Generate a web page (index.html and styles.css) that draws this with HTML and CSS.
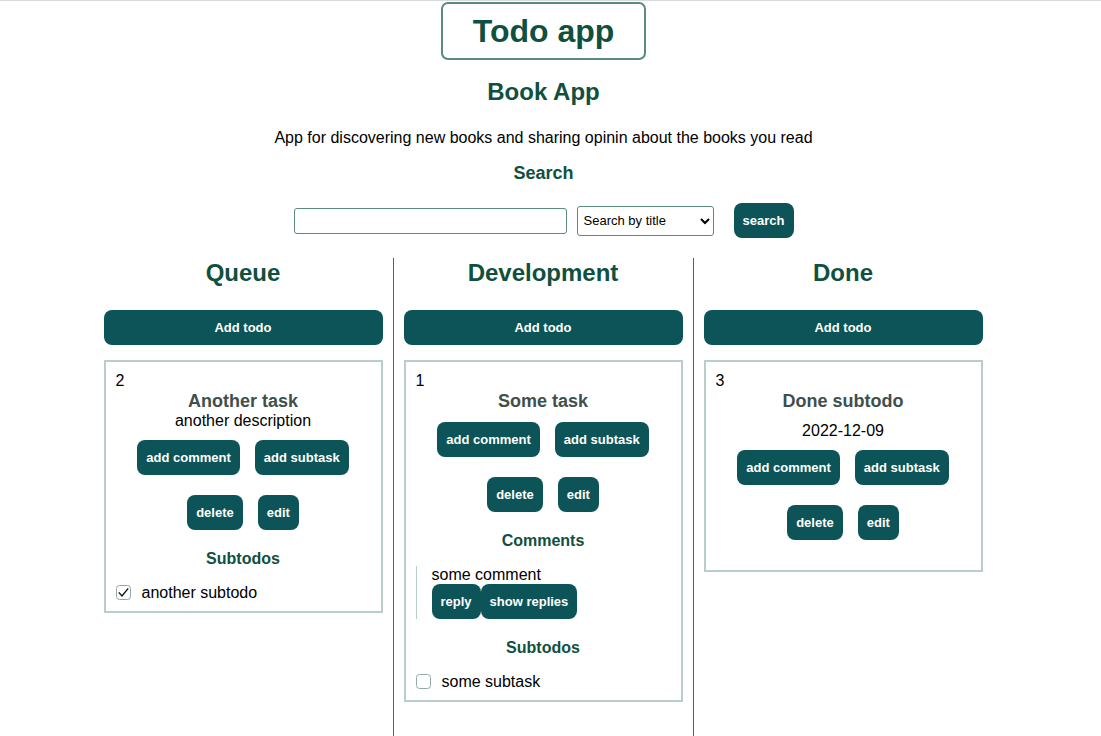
FILE: index.html
```html
<!DOCTYPE html>
<html lang="en">
<head>
<meta charset="utf-8">
<title>Todo app</title>
<link rel="stylesheet" href="styles.css">
</head>
<body>
<div class="page">
  <header class="header">
    <h1 class="logo">Todo app</h1>
    <h2 class="app-title">Book App</h2>
    <p class="app-desc">App for discovering new books and sharing opinin about the books you read</p>
    <h3 class="search-title">Search</h3>
    <form class="search-row">
      <input class="search-input" type="text">
      <select class="search-select">
        <option>Search by title</option>
      </select>
      <button class="btn btn-search" type="button">search</button>
    </form>
  </header>

  <main class="board">
    <section class="column">
      <h2 class="column-title">Queue</h2>
      <button class="btn btn-add" type="button">Add todo</button>
      <article class="card">
        <div class="card-id">2</div>
        <h3 class="card-title">Another task</h3>
        <div class="card-desc">another description</div>
        <div class="actions">
          <button class="btn" type="button">add comment</button>
          <button class="btn" type="button">add subtask</button>
        </div>
        <div class="actions actions-second">
          <button class="btn" type="button">delete</button>
          <button class="btn" type="button">edit</button>
        </div>
        <h4 class="section-title">Subtodos</h4>
        <div class="subtodo">
          <span class="check">
            <svg viewBox="0 0 15 15" width="15" height="15"><rect x="0.5" y="0.5" width="14" height="14" rx="3" fill="#fff" stroke="#8fa9a3"/><path d="M2.8 7.4 L6 11 L12.2 3.4" fill="none" stroke="#111" stroke-width="1.4"/></svg>
          </span>
          <span class="subtodo-text">another subtodo</span>
        </div>
      </article>
    </section>

    <section class="column">
      <h2 class="column-title">Development</h2>
      <button class="btn btn-add" type="button">Add todo</button>
      <article class="card">
        <div class="card-id">1</div>
        <h3 class="card-title">Some task</h3>
        <div class="actions">
          <button class="btn" type="button">add comment</button>
          <button class="btn" type="button">add subtask</button>
        </div>
        <div class="actions actions-second">
          <button class="btn" type="button">delete</button>
          <button class="btn" type="button">edit</button>
        </div>
        <h4 class="section-title">Comments</h4>
        <div class="comment">
          <div class="comment-text">some comment</div>
          <div class="comment-actions">
            <button class="btn" type="button">reply</button>
            <button class="btn" type="button">show replies</button>
          </div>
        </div>
        <h4 class="section-title">Subtodos</h4>
        <div class="subtodo">
          <span class="check">
            <svg viewBox="0 0 15 15" width="15" height="15"><rect x="0.5" y="0.5" width="14" height="14" rx="3" fill="#fff" stroke="#8fa9a3"/></svg>
          </span>
          <span class="subtodo-text">some subtask</span>
        </div>
      </article>
    </section>

    <section class="column">
      <h2 class="column-title">Done</h2>
      <button class="btn btn-add" type="button">Add todo</button>
      <article class="card card-done">
        <div class="card-id">3</div>
        <h3 class="card-title">Done subtodo</h3>
        <p class="card-date">2022-12-09</p>
        <div class="actions">
          <button class="btn" type="button">add comment</button>
          <button class="btn" type="button">add subtask</button>
        </div>
        <div class="actions actions-second">
          <button class="btn" type="button">delete</button>
          <button class="btn" type="button">edit</button>
        </div>
      </article>
    </section>
  </main>
</div>
</body>
</html>
```

FILE: styles.css
```css
* {
  box-sizing: border-box;
}

html, body {
  margin: 0;
  padding: 0;
  background: #fff;
}

body {
  font-family: "Liberation Sans", Arial, sans-serif;
  color: #000;
  font-size: 16px;
  overflow: hidden;
  border-top: 1px solid #dadada;
}

.page {
  width: 1087px;
}

.header {
  display: flex;
  flex-direction: column;
  align-items: center;
}

.logo {
  margin: 1px 0 0;
  height: 58px;
  padding: 0 30px;
  border: 2px solid #5b8b7c;
  border-radius: 7px;
  font-size: 32px;
  line-height: 55px;
  font-weight: bold;
  color: #0f5040;
}

.app-title {
  margin: 18px 0 0;
  font-size: 24px;
  line-height: 28px;
  font-weight: bold;
  color: #0f5040;
}

.app-desc {
  margin: 23px 0 0;
  font-size: 16px;
  line-height: 18px;
}

.search-title {
  margin: 16px 0 0;
  font-size: 18px;
  line-height: 20px;
  font-weight: bold;
  color: #0f5040;
}

.search-row {
  margin: 20px 0 0;
  display: flex;
  align-items: center;
  height: 35px;
}

.search-input {
  width: 273px;
  height: 26px;
  border: 1px solid #5b8b7c;
  border-radius: 3px;
  margin: 0 10px 0 0;
  padding: 0 4px;
  font: 13px "Liberation Sans", Arial, sans-serif;
}

.search-select {
  width: 137px;
  height: 30px;
  border: 1px solid #5b8b7c;
  border-radius: 3px;
  margin: 0 20px 0 0;
  padding: 0 2px;
  background: #fff;
  color: #000;
  font: 13px "Liberation Sans", Arial, sans-serif;
}

.btn {
  height: 35px;
  padding: 0 9px;
  border: none;
  border-radius: 8px;
  background: #0c5457;
  color: #fff;
  font: bold 13px "Liberation Sans", Arial, sans-serif;
  cursor: pointer;
  white-space: nowrap;
}

.btn-search {
  width: 60px;
  padding: 0;
}

.board {
  margin: 20px auto 0;
  width: 900px;
  display: flex;
  align-items: stretch;
}

.column {
  width: 300px;
  min-height: 520px;
  padding: 0 10px;
  border-right: 1px solid #3f6b66;
  display: flex;
  flex-direction: column;
}

.column:last-child {
  border-right: 1px solid transparent;
}

.column-title {
  margin: 0;
  padding-top: 1px;
  text-align: center;
  font-size: 24px;
  line-height: 27px;
  font-weight: bold;
  color: #0f5040;
}

.btn-add {
  margin-top: 24px;
  width: 100%;
  flex: none;
}

.card {
  margin-top: 15px;
  border: 2px solid #b9cec8;
  padding: 9px 10px 9px;
  display: flex;
  flex-direction: column;
}

.card-done {
  padding-bottom: 30px;
}

.card-id {
  font-size: 16px;
  line-height: 18px;
  padding-top: 1px;
  height: 18px;
}

.card-title {
  margin: 2px 0 0;
  text-align: center;
  font-size: 18px;
  line-height: 20px;
  font-weight: bold;
  color: #3f4f4b;
}

.card-desc {
  padding-top: 1px;
  text-align: center;
  font-size: 16px;
  line-height: 17px;
}

.card-date {
  margin: 11px 0 0;
  text-align: center;
  font-size: 16px;
  line-height: 17px;
}

.actions {
  margin-top: 11px;
  display: flex;
  justify-content: center;
  gap: 15px;
}

.actions-second {
  margin-top: 20px;
}

.section-title {
  margin: 20px 0 0;
  text-align: center;
  font-size: 16px;
  line-height: 17px;
  font-weight: bold;
  color: #0f5040;
}

.comment {
  margin-top: 17px;
  border-left: 1px solid #b9cec8;
  padding-left: 15px;
}

.comment-text {
  font-size: 16px;
  line-height: 18px;
}

.comment-actions {
  display: flex;
}

.subtodo {
  margin-top: 15px;
  display: flex;
  align-items: center;
  height: 20px;
  font-size: 16px;
  line-height: 20px;
}

.subtodo-text {
  padding-top: 2px;
}

.check {
  display: flex;
  width: 15px;
  height: 15px;
  margin-right: 11px;
  margin-top: 1px;
}
```
